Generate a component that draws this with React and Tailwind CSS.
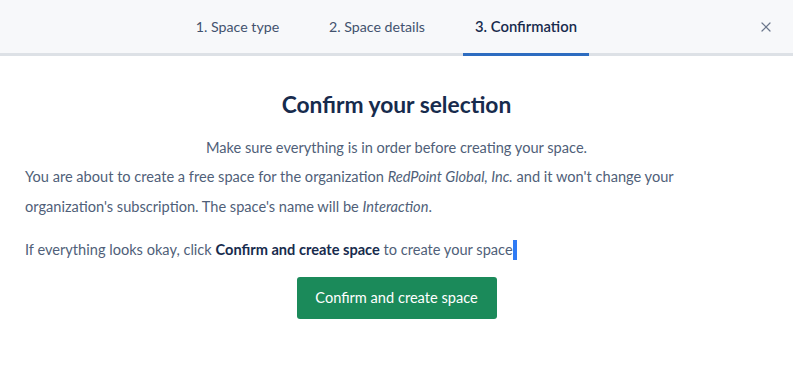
import { X } from "lucide-react";

const tabs = [
  { label: "1. Space type", width: "w-[107px]" },
  { label: "2. Space details", width: "w-[122px]" },
  { label: "3. Confirmation", width: "w-[126px]", active: true },
];

export default function App() {
  return (
    <div className="w-[793px] h-[366px] bg-white font-['Lato','Liberation_Sans',sans-serif] text-[#505f79]">
      <header className="relative flex h-[56px] bg-[#f7f8fa] border-b-[3px] border-[#dde1e6]">
        <nav className="flex gap-[25px] ml-[184px]">
          {tabs.map((t) => (
            <div
              key={t.label}
              className={`${t.width} flex items-center justify-center -mb-[3px] border-b-[3px] ${
                t.active
                  ? "border-[#2d6cc0] text-[#172b4d] text-[14.8px] font-semibold"
                  : "border-transparent text-[#42526e] text-[14.2px]"
              }`}
            >
              {t.label}
            </div>
          ))}
        </nav>
        <button className="absolute right-[19px] top-[19px] text-[#6b778c]">
          <X size={16} strokeWidth={1.8} />
        </button>
      </header>

      <main className="px-[25px]">
        <h1 className="mt-[34px] text-center text-[22.8px] leading-[28px] font-bold text-[#172b4d]">
          Confirm your selection
        </h1>
        <p className="mt-[20px] text-center text-[14.6px] leading-[20px]">
          Make sure everything is in order before creating your space.
        </p>
        <p className="mt-[4px] w-[700px] text-[14.6px] leading-[30px]">
          You are about to create a free space for the organization <em>RedPoint Global, Inc.</em> and it won't
          change your organization's subscription. The space's name will be <em>Interaction</em>.
        </p>
        <p className="mt-[13px] text-[14.6px] leading-[30px]">
          If everything looks okay, click <strong className="text-[#172b4d]">Confirm and create space</strong> to
          create your space
          <span className="inline-block align-middle w-[4px] h-[20px] bg-[#2f7bf5] -mt-[2px]" />
        </p>
        <div className="flex justify-center mt-[12px]">
          <button className="w-[200px] h-[42px] rounded-[3px] bg-[#1b8a5a] text-white text-[14.6px]">
            Confirm and create space
          </button>
        </div>
      </main>
    </div>
  );
}
